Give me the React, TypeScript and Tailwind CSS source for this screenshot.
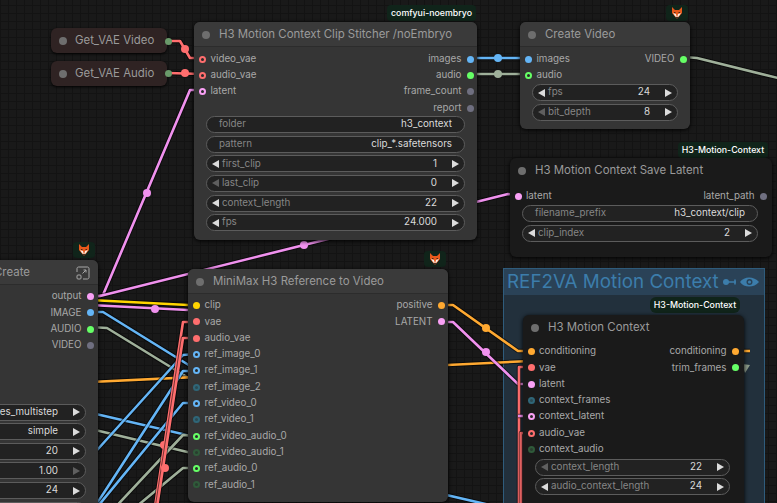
import React from "react";

const dotClass: Record<string, string> = {
  red: "bg-[#ff6e6e]",
  pink: "bg-[#f9a0f5]",
  blue: "bg-[#64b5f6]",
  green: "bg-[#66ff66]",
  orange: "bg-[#ffa931]",
  yellow: "bg-[#ffd500]",
  grey: "bg-[#6f6f80]",
  redRing: "bg-[#2a2a2a] border-2 border-[#ff6e6e]",
  pinkRing: "bg-[#2a2a2a] border-2 border-[#f9a0f5]",
  blueRing: "bg-[#2a2a2a] border-2 border-[#64b5f6]",
  greenRing: "bg-[#2a2a2a] border-2 border-[#66ff66]",
  tealDim: "bg-[#2c4a52] border-2 border-[#2f6678]",
  greenDim: "bg-[#2a3d2f] border-2 border-[#2f5a3a]",
};

function Dot({ c }: { c: string }) {
  return <span className={`h-[7px] w-[7px] shrink-0 rounded-full ${dotClass[c]}`} />;
}

function Row({ label, c, dim }: { label: string; c: string; dim?: boolean }) {
  return (
    <div className={`flex h-[16.3px] items-center gap-[4.5px] ${dim ? "text-[#8a8a8a]" : "text-[#a8a8a8]"}`}>
      <Dot c={c} />
      <span className="whitespace-nowrap">{label}</span>
    </div>
  );
}

function Out({ label, c }: { label: string; c: string }) {
  return (
    <div className="flex h-[16.3px] items-center justify-end gap-[5px] text-[#a8a8a8]">
      <span className="whitespace-nowrap">{label}</span>
      <Dot c={c} />
    </div>
  );
}

function Tri({ dir, dim }: { dir: "l" | "r"; dim?: boolean }) {
  return (
    <svg width="7" height="8" viewBox="0 0 7 8" className="shrink-0">
      <polygon points={dir === "l" ? "7,0 7,8 0,4" : "0,0 0,8 7,4"} fill={dim ? "#5f5f5f" : "#dcdcdc"} />
    </svg>
  );
}

function Text({ label, value }: { label: string; value: string }) {
  return (
    <div className="flex h-[17px] items-center justify-between rounded-full border border-[#5c5c5c] bg-[#222222] pr-[12px] pl-[12px]">
      <span className="text-[#868686]">{label}</span>
      <span className="text-[#dadada]">{value}</span>
    </div>
  );
}

function Num({ label, value, dimL, dimR }: { label: string; value: string; dimL?: boolean; dimR?: boolean }) {
  return (
    <div className="flex h-[17px] items-center rounded-full border border-[#5c5c5c] bg-[#222222] pr-[5px] pl-[5px]">
      <Tri dir="l" dim={dimL} />
      <span className="ml-[3px] whitespace-nowrap text-[#868686]">{label}</span>
      <span className="mr-[15px] ml-auto whitespace-nowrap text-[#dadada]">{value}</span>
      <Tri dir="r" dim={dimR} />
    </div>
  );
}

function Title({ children, dark }: { children: React.ReactNode; dark?: boolean }) {
  return (
    <div className={`flex h-[25px] items-center gap-[9px] pt-[1px] pl-[8px] text-[11.45px] text-[#9a9a9a] ${dark ? "" : "border-b border-[#2c2c2c] bg-[#3a3a3a]"}`}>
      <span className="h-[8px] w-[8px] shrink-0 rounded-full bg-[#6e6e6e]" />
      <span className="whitespace-nowrap">{children}</span>
    </div>
  );
}

type W = { d: string; c: string; m?: [number, number][] };

const wires: W[] = [
  { d: "M168 41 L180 41 L190 58 L202 58", c: "#ff6e6e", m: [[185, 49]] },
  { d: "M168 73 L202 74", c: "#ff6e6e", m: [[185, 73]] },
  { d: "M92 296 L103 295 L190 90 L202 90", c: "#f091ee", m: [[147, 193]] },
  { d: "M92 297 L100 296 L508 194 L518 195", c: "#f091ee", m: [[304, 245]] },
  { d: "M90 300 L188 305", c: "#ffd500" },
  { d: "M90 305 L188 310", c: "#f091ee", m: [[155, 309]] },
  { d: "M90 312 L103 312 L200 372", c: "#64b5f6" },
  { d: "M90 327 L107 328 L200 385", c: "#9fb09a" },
  { d: "M70 408 L520 512", c: "#64b5f6" },
  { d: "M70 424 L200 455", c: "#9fb09a" },
  { d: "M70 383 L530 361", c: "#ffa931" },
  { d: "M70 480 L183 355 L196 354", c: "#64b5f6" },
  { d: "M70 545 L183 371 L196 371", c: "#64b5f6" },
  { d: "M70 540 L183 403 L196 403", c: "#64b5f6" },
  { d: "M80 545 L183 435 L196 436", c: "#9fb09a" },
  { d: "M90 545 L183 468 L196 468", c: "#9fb09a" },
  { d: "M196 322 L183 322 L153 520", c: "#ff6e6e", m: [[164, 445]] },
  { d: "M196 338 L183 338 L155 520", c: "#ff6e6e", m: [[165, 468]] },
  { d: "M440 305 L453 305 L518 351 L530 351", c: "#ffa931", m: [[486, 328]] },
  { d: "M440 322 L453 322 L518 384 L530 384", c: "#f091ee", m: [[486, 352]] },
  { d: "M470 58 L530 58", c: "#64b5f6", m: [[498, 58]] },
  { d: "M470 74 L530 74", c: "#9fb09a", m: [[498, 74]] },
  { d: "M684 57 L697 58 L790 81", c: "#9fb09a" },
  { d: "M530 367 L519 367 L519 510", c: "#ff6e6e" },
  { d: "M530 433 L521 433 L521 510", c: "#ff6e6e" },
  { d: "M530 416 L518 416", c: "#f091ee" },
  { d: "M736 351 L750 351", c: "#ffa931" },
];

function Wires() {
  return (
    <svg className="absolute inset-0 h-full w-full" viewBox="0 0 777 503" fill="none">
      {wires.map((w, i) => (
        <g key={i}>
          <path d={w.d} stroke="#000" strokeOpacity="0.55" strokeWidth="4.5" strokeLinejoin="round" />
          <path d={w.d} stroke={w.c} strokeWidth="2.6" strokeLinejoin="round" />
          {w.m?.map(([x, y], j) => (
            <circle key={j} cx={x} cy={y} r="4" fill={w.c} />
          ))}
        </g>
      ))}
      <polygon points="742,364 750,365 745,373" fill="#8c9a88" />
    </svg>
  );
}

function Fox() {
  return (
    <svg width="12" height="12" viewBox="0 0 12 12">
      <polygon points="1,0 4,3 8,3 11,0 11,6 6,12 1,6" fill="#e8591c" />
      <polygon points="2,6 5,7 6,11 4,9" fill="#f4efe8" />
      <polygon points="10,6 7,7 6,11 8,9" fill="#f4efe8" />
      <rect x="5.2" y="10" width="1.6" height="1.4" fill="#1c1c1c" />
      <rect x="3.2" y="5" width="1.2" height="1" fill="#1c1c1c" />
      <rect x="7.6" y="5" width="1.2" height="1" fill="#1c1c1c" />
    </svg>
  );
}

function FoxBadge({ pos }: { pos: string }) {
  return (
    <div className={`absolute flex h-[16px] w-[22px] items-center justify-center rounded-[4px] bg-[#10241a] ${pos}`}>
      <Fox />
    </div>
  );
}

function Badge({ pos, children }: { pos: string; children: React.ReactNode }) {
  return (
    <div className={`absolute flex h-[16px] items-center justify-center rounded-[4px] bg-[#10241a] text-[8.8px] font-medium whitespace-nowrap text-white ${pos}`}>
      {children}
    </div>
  );
}

export default function App() {
  return (
    <div className="relative h-[503px] w-[777px] overflow-hidden bg-[#191919] bg-[linear-gradient(#131313_1px,transparent_1px),linear-gradient(90deg,#131313_1px,transparent_1px)] bg-[size:8px_8px] bg-[position:0_5px] font-['Inter',sans-serif] text-[9.8px]">
      {/* group */}
      <div className="absolute top-[268px] left-[503px] h-[240px] w-[262px] border border-[#2f5c7c] bg-[#22303c]">
        <div className="flex h-[26px] items-center bg-[#2a4257] pl-[3px] text-[18.8px] whitespace-nowrap text-[#3c7dab]">
          <span>REF2VA Motion Context</span>
          <svg width="38" height="14" viewBox="0 0 38 14" className="mr-[4px] ml-auto shrink-0">
            <circle cx="4" cy="7" r="3" fill="#3c7dab" />
            <path d="M4 7H14M13 4.5V9.5" stroke="#3c7dab" strokeWidth="1.6" />
            <path d="M18 7C22 1 32 1 37 7C32 13 22 13 18 7Z" fill="#3c7dab" />
            <circle cx="27.5" cy="7" r="3" fill="#2a4257" />
            <circle cx="27.5" cy="7" r="1.6" fill="#3c7dab" />
          </svg>
        </div>
      </div>

      <Wires />

      {/* Get nodes */}
      <div className="absolute top-[28px] left-[51px] flex h-[25px] w-[116px] items-center gap-[8px] rounded-[6px] bg-[#2f2323] pt-[1px] pl-[8px] text-[11.4px] text-[#9a9a9a] shadow-[0_1px_3px_#000]">
        <span className="h-[8px] w-[8px] rounded-full bg-[#6e6e6e]" />
        <span className="whitespace-nowrap">Get_VAE Video</span>
      </div>
      <div className="absolute top-[61px] left-[51px] flex h-[25px] w-[116px] items-center gap-[8px] rounded-[6px] bg-[#2f2323] pt-[1px] pl-[8px] text-[11.4px] text-[#9a9a9a] shadow-[0_1px_3px_#000]">
        <span className="h-[8px] w-[8px] rounded-full bg-[#6e6e6e]" />
        <span className="whitespace-nowrap">Get_VAE Audio</span>
      </div>
      <span className="absolute top-[37.5px] left-[164.5px] h-[7px] w-[7px] rounded-full bg-[#6a9a6a]" />
      <span className="absolute top-[69.5px] left-[164.5px] h-[7px] w-[7px] rounded-full bg-[#6a9a6a]" />

      {/* Clip Stitcher */}
      <Badge pos="top-[5px] left-[387px] w-[89px]">comfyui-noembryo</Badge>
      <div className="absolute top-[22px] left-[194px] h-[218px] w-[283px] overflow-hidden rounded-[6px] bg-[#353535] shadow-[0_1px_4px_#000]">
        <Title>H3 Motion Context Clip Stitcher /noEmbryo</Title>
        <div className="flex justify-between pt-[4px] pr-[3.5px] pl-[5px]">
          <div>
            <Row label="video_vae" c="redRing" />
            <Row label="audio_vae" c="redRing" />
            <Row label="latent" c="pinkRing" />
          </div>
          <div>
            <Out label="images" c="blue" />
            <Out label="audio" c="green" />
            <Out label="frame_count" c="grey" />
            <Out label="report" c="grey" />
          </div>
        </div>
        <div className="flex flex-col gap-[2.6px] px-[12px]">
          <Text label="folder" value="h3_context" />
          <Text label="pattern" value="clip_*.safetensors" />
          <Num label="first_clip" value="1" />
          <Num label="last_clip" value="0" dimL />
          <Num label="context_length" value="22" />
          <Num label="fps" value="24.000" />
        </div>
      </div>

      {/* Create Video */}
      <FoxBadge pos="top-[5px] left-[666px]" />
      <div className="absolute top-[22px] left-[520px] h-[107px] w-[170px] overflow-hidden rounded-[6px] bg-[#353535] shadow-[0_1px_4px_#000]">
        <Title>Create Video</Title>
        <div className="flex justify-between pt-[4px] pr-[3.5px] pl-[5px]">
          <div>
            <Row label="images" c="blue" />
            <Row label="audio" c="greenRing" />
          </div>
          <div>
            <Out label="VIDEO" c="green" />
          </div>
        </div>
        <div className="mt-[0.5px] flex flex-col gap-[2.6px] px-[12px]">
          <Num label="fps" value="24" />
          <Num label="bit_depth" value="8" dimL />
        </div>
      </div>

      {/* Save Latent */}
      <Badge pos="top-[142px] left-[678px] w-[90px]">H3-Motion-Context</Badge>
      <div className="absolute top-[158px] left-[510px] h-[99px] w-[262px] overflow-hidden rounded-[6px] bg-[#1a1a1a] shadow-[0_1px_4px_#000]">
        <Title dark>H3 Motion Context Save Latent</Title>
        <div className="flex justify-between pt-[5px] pr-[5.5px] pl-[4.5px]">
          <Row label="latent" c="pink" />
          <Out label="latent_path" c="grey" />
        </div>
        <div className="mt-[1px] flex flex-col gap-[2.6px] pr-[14px] pl-[12px]">
          <Text label="filename_prefix" value="h3_context/clip" />
          <Num label="clip_index" value="2" />
        </div>
      </div>

      {/* Create */}
      <FoxBadge pos="top-[242px] left-[73px]" />
      <div className="absolute top-[260px] left-[-100px] h-[260px] w-[198px] overflow-hidden rounded-[6px] bg-[#353535] shadow-[0_1px_4px_#000]">
        <div className="flex h-[25px] items-center border-b border-[#2c2c2c] bg-[#3a3a3a] pt-[1px] pr-[8px] pl-[94px] text-[11.45px] text-[#9a9a9a]">
          <span className="whitespace-nowrap">Create</span>
          <svg width="14" height="14" viewBox="0 0 14 14" fill="none" stroke="#a8a8a8" strokeWidth="1" className="ml-auto">
            <path d="M1 6V2.5C1 1.7 1.7 1 2.5 1H11.5C12.3 1 13 1.7 13 2.5V11.5C13 12.3 12.3 13 11.5 13H7" />
            <rect x="1" y="9" width="4" height="4" rx="1" />
            <path d="M6.5 7.5L10 4M7.5 4H10V6.5" />
          </svg>
        </div>
        <div className="flex flex-col items-end pt-[3.5px] pr-[4.5px]">
          <Out label="output" c="pink" />
          <Out label="IMAGE" c="blue" />
          <Out label="AUDIO" c="green" />
          <Out label="VIDEO" c="grey" />
        </div>
        <div className="mt-[50px] flex flex-col gap-[2.6px] pr-[12px] pl-[12px]">
          <Num label="sampler" value="res_multistep" />
          <Num label="scheduler" value="simple" />
          <Num label="steps" value="20" />
          <Num label="cfg" value="1.00" dimR />
          <Num label="frames" value="24" />
          <Num label="batch" value="1" />
        </div>
      </div>

      {/* MiniMax */}
      <FoxBadge pos="top-[251px] left-[424px]" />
      <div className="absolute top-[269px] left-[188px] h-[233px] w-[260px] overflow-hidden rounded-[6px] bg-[#353535] shadow-[0_1px_4px_#000]">
        <Title>MiniMax H3 Reference to Video</Title>
        <div className="flex justify-between pt-[3.5px] pr-[3.5px] pl-[5px]">
          <div>
            <Row label="clip" c="yellow" />
            <Row label="vae" c="red" />
            <Row label="audio_vae" c="red" />
            <Row label="ref_image_0" c="blueRing" />
            <Row label="ref_image_1" c="blueRing" />
            <Row label="ref_image_2" c="tealDim" />
            <Row label="ref_video_0" c="blueRing" />
            <Row label="ref_video_1" c="tealDim" />
            <Row label="ref_video_audio_0" c="greenRing" />
            <Row label="ref_video_audio_1" c="greenDim" />
            <Row label="ref_audio_0" c="greenRing" />
            <Row label="ref_audio_1" c="greenDim" />
          </div>
          <div>
            <Out label="positive" c="orange" />
            <Out label="LATENT" c="pink" />
          </div>
        </div>
      </div>

      {/* H3 Motion Context */}
      <Badge pos="top-[297px] left-[650px] w-[90px] rounded-[6px]">H3-Motion-Context</Badge>
      <div className="absolute top-[315px] left-[523px] h-[200px] w-[221px] overflow-hidden rounded-[6px] bg-[#1a1a1a] shadow-[0_1px_4px_#000]">
        <Title dark>H3 Motion Context</Title>
        <div className="flex justify-between pt-[3.5px] pr-[5.5px] pl-[4.5px]">
          <div>
            <Row label="conditioning" c="orange" />
            <Row label="vae" c="red" />
            <Row label="latent" c="pink" />
            <Row label="context_frames" c="tealDim" />
            <Row label="context_latent" c="pinkRing" />
            <Row label="audio_vae" c="redRing" />
            <Row label="context_audio" c="greenDim" />
          </div>
          <div>
            <Out label="conditioning" c="orange" />
            <Out label="trim_frames" c="green" />
          </div>
        </div>
        <div className="mt-[1px] flex flex-col gap-[2.6px] pr-[14px] pl-[12px]">
          <Num label="context_length" value="22" dimL />
          <Num label="audio_context_length" value="24" />
        </div>
      </div>
    </div>
  );
}
